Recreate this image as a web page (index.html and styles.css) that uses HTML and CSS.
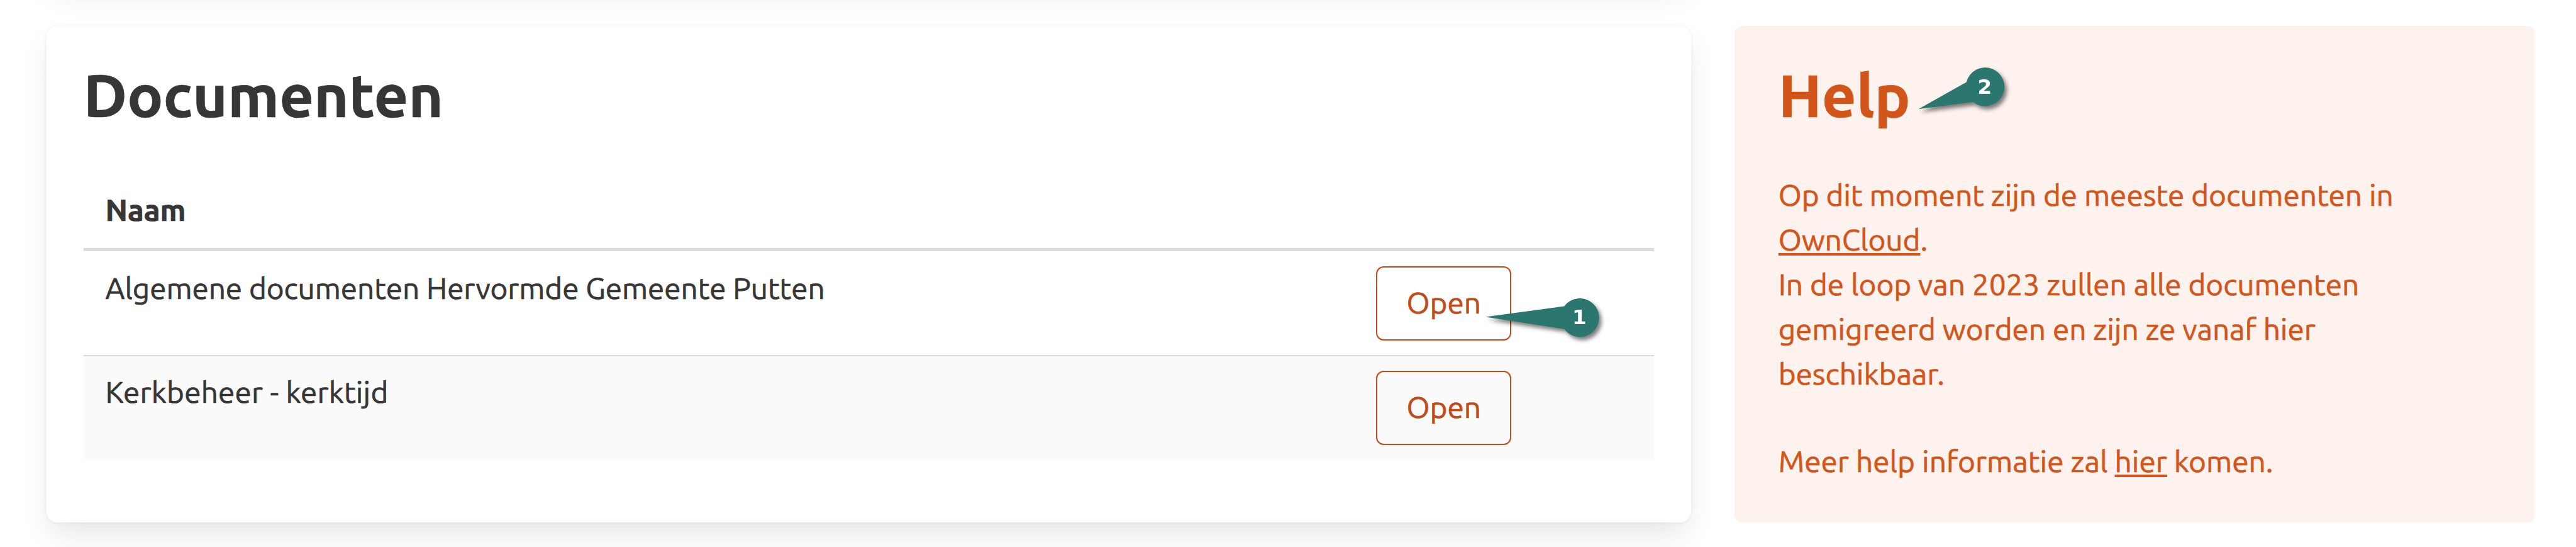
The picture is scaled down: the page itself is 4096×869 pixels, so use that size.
FILE: index.html
```
<!DOCTYPE html>
<html lang="nl">
<head>
<meta charset="utf-8">
<title>Documenten</title>
<link rel="stylesheet" href="styles.css">
</head>
<body>
<div class="page">
  <div class="main">
    <div class="box box-previous"></div>
    <section class="box documents">
      <h1 class="title">Documenten</h1>
      <div class="table">
        <div class="row head"><div class="cell">Naam</div><div class="cell"></div></div>
        <div class="row first">
          <div class="cell">Algemene documenten Hervormde Gemeente Putten</div>
          <div class="cell action">
            <a class="button">Open</a>
            <svg class="pin pin-one" width="200" height="90" viewBox="2360 464 200 90">
              <path d="M2362 503.6 L2487.2 486.6 A30.7 30.7 0 1 1 2487.2 522.8 Z"/>
              <text x="2511.3" y="515">1</text>
            </svg>
          </div>
        </div>
        <div class="row second">
          <div class="cell">Kerkbeheer - kerktijd</div>
          <div class="cell action"><a class="button">Open</a></div>
        </div>
      </div>
    </section>
  </div>
  <aside class="help">
    <h1 class="title">Help</h1>
    <svg class="pin pin-two" width="170" height="110" viewBox="3040 94 170 110">
      <path d="M3050.5 173.2 L3126.7 130.4 A30.7 30.7 0 1 1 3137.3 161.9 Z"/>
      <text x="3155.8" y="149">2</text>
    </svg>
    <p>Op dit moment zijn de meeste documenten in<br><a>OwnCloud</a>.<br>In de loop van 2023 zullen alle documenten<br>gemigreerd worden en zijn ze vanaf hier<br>beschikbaar.</p>
    <p class="more">Meer help informatie zal <a>hier</a> komen.</p>
  </aside>
</div>
</body>
</html>
```
FILE: styles.css
```
* { box-sizing: border-box; }
body {
  margin: 0;
  background: #fff;
  color: #363636;
  font-family: Ubuntu, "Open Sans", "Noto Sans", sans-serif;
  font-size: 47.65px;
  line-height: 70.8px;
  -webkit-text-stroke: 0.7px currentColor;
}
.page {
  display: flex;
  align-items: flex-start;
  gap: 69.4px;
  width: 4096px;
  height: 869px;
  padding-left: 73.7px;
  overflow: hidden;
}
.main { width: 2615.3px; }
.box {
  background: #fff;
  border-radius: 18px;
  box-shadow: 0 23.7px 47.4px -6px rgba(10, 10, 10, .1), 0 0 0 3px rgba(10, 10, 10, .02);
}
.box-previous { height: 200px; margin-top: -230.7px; margin-bottom: 71.2px; }
.documents { height: 789.4px; padding: 56.5px 59px 0; }
.title {
  margin: 0 0 70.7px;
  font-size: 95.3px;
  line-height: 107px;
  font-weight: 700;
}
.row { display: grid; grid-template-columns: 2020.8px 1fr; }
.cell { padding: 23.6px 34.8px 0; white-space: nowrap; letter-spacing: -.06px; }
.head {
  height: 124.3px;
  border-bottom: 5px solid #dbdbdb;
  font-weight: 700;
}
.head .cell { padding-top: 24.5px; }
.first { height: 167.5px; border-bottom: 2px solid #dbdbdb; }
.second { height: 164px; background: #fafafa; }
.second .cell { padding-top: 21.4px; letter-spacing: .2px; }
.row .action { position: relative; padding-top: 24.2px; letter-spacing: 0; }
.second .action { padding-top: 22.3px; }
.button {
  display: flex;
  align-items: center;
  justify-content: center;
  width: 215px;
  height: 118px;
  padding-bottom: 1px;
  border: 2px solid #bf4c19;
  border-radius: 12px;
  color: #bf4c19;
}
.help {
  position: relative;
  width: 1271.2px;
  height: 789.4px;
  margin-top: 40.5px;
  padding: 56.5px 69.3px 0;
  background: #fdf2ee;
  border-radius: 12px;
  color: #d2551a;
}
.help .title { margin-bottom: 71.4px; }
.help p { margin: 0 0 69.1px; white-space: nowrap; }
.help .more { letter-spacing: .06px; }
.help a {
  text-decoration: underline;
  text-decoration-thickness: 4px;
  text-underline-offset: 4px;
  text-decoration-skip-ink: none;
}
.pin {
  position: absolute;
  overflow: visible;
  fill: #2b776f;
  filter: drop-shadow(4px 5px 3px rgba(0, 0, 0, .5));
}
.pin text {
  fill: #fff;
  font: bold 32.5px "DejaVu Sans", sans-serif;
  text-anchor: middle;
  -webkit-text-stroke: 0;
}
/* both pins point at the element on their left */
.pin-one { left: 206.5px; top: 65px; }
.pin-two { left: 281.6px; top: 53.5px; }
```
